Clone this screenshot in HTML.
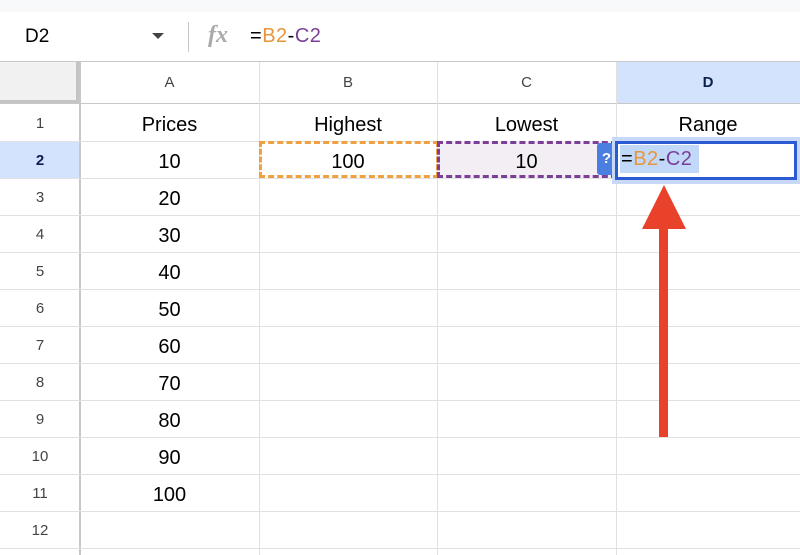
<!DOCTYPE html>
<html><head><meta charset="utf-8"><style>
*{margin:0;padding:0;box-sizing:border-box}
body{width:800px;height:555px;overflow:hidden;background:#fff;font-family:"Liberation Sans",Arial,sans-serif;position:relative}
.a{position:absolute}
.hl{position:absolute;left:0;width:800px;height:1px;background:#e1e1e1}
.vl{position:absolute;top:62px;height:493px;width:1px;background:#e1e1e1}
.rn{position:absolute;left:0;width:80px;text-align:center;font-size:15px;color:#444;line-height:37px;padding-top:1px}
.c{position:absolute;text-align:center;font-size:20px;color:#000;line-height:37px;padding-top:3px}
.ch{position:absolute;top:62px;height:42px;line-height:42px;text-align:center;font-size:15px;color:#444}
.f{font-family:"Liberation Sans",Arial,sans-serif;font-size:20px;letter-spacing:0.5px}
</style></head><body>
<div class="a" style="left:0;top:0;width:800px;height:12px;background:#f8f9fa"></div>
<div class="a" style="left:25px;top:26px;font-size:19px;color:#000">D2</div>
<div class="a" style="left:152px;top:33px;width:0;height:0;border-left:6px solid transparent;border-right:6px solid transparent;border-top:6px solid #444"></div>
<div class="a" style="left:188px;top:22px;width:1px;height:30px;background:#c7c7c7"></div>
<div class="a" style="left:208px;top:22px;font-size:24px;font-style:italic;font-family:'Liberation Serif',serif;color:#aaa;font-weight:bold">fx</div>
<div class="a f" style="left:250px;top:25px"><span style="color:#000">=</span><span style="color:#e8963a">B2</span><span style="color:#000">-</span><span style="color:#7b3f98">C2</span></div>
<div class="hl" style="top:61px;background:#c7c7c7"></div>
<div class="a" style="left:616px;top:62px;width:184px;height:42px;background:#d3e3fd"></div>
<div class="a" style="left:0;top:62px;width:80px;height:42px;background:#f1f1f1;border-right:4px solid #c4c4c4;border-bottom:4px solid #c4c4c4"></div>
<div class="ch" style="left:80px;width:179px">A</div>
<div class="ch" style="left:259px;width:178px">B</div>
<div class="ch" style="left:437px;width:179px">C</div>
<div class="ch" style="left:616px;width:184px;color:#0b1f4d;font-weight:bold">D</div>
<div class="hl" style="top:103px;background:#c7c7c7"></div>
<div class="a" style="left:0;top:141px;width:80px;height:37px;background:#d3e3fd"></div>
<div class="a" style="left:79px;top:62px;width:2px;height:493px;background:#c7c7c7"></div>
<div class="vl" style="left:259px"></div>
<div class="vl" style="left:437px"></div>
<div class="vl" style="left:616px"></div>
<div class="hl" style="top:141px"></div><div class="hl" style="top:178px"></div><div class="hl" style="top:215px"></div><div class="hl" style="top:252px"></div><div class="hl" style="top:289px"></div><div class="hl" style="top:326px"></div><div class="hl" style="top:363px"></div><div class="hl" style="top:400px"></div><div class="hl" style="top:437px"></div><div class="hl" style="top:474px"></div><div class="hl" style="top:511px"></div><div class="hl" style="top:548px"></div>
<div class="rn" style="top:104px">1</div>
<div class="rn" style="top:141px;color:#0b1f4d;font-weight:bold">2</div>
<div class="rn" style="top:178px">3</div><div class="rn" style="top:215px">4</div><div class="rn" style="top:252px">5</div><div class="rn" style="top:289px">6</div><div class="rn" style="top:326px">7</div><div class="rn" style="top:363px">8</div><div class="rn" style="top:400px">9</div><div class="rn" style="top:437px">10</div><div class="rn" style="top:474px">11</div><div class="rn" style="top:511px">12</div>
<div class="c" style="left:80px;width:179px;top:104px">Prices</div>
<div class="c" style="left:80px;width:179px;top:141px">10</div>
<div class="c" style="left:80px;width:179px;top:178px">20</div>
<div class="c" style="left:80px;width:179px;top:215px">30</div>
<div class="c" style="left:80px;width:179px;top:252px">40</div>
<div class="c" style="left:80px;width:179px;top:289px">50</div>
<div class="c" style="left:80px;width:179px;top:326px">60</div>
<div class="c" style="left:80px;width:179px;top:363px">70</div>
<div class="c" style="left:80px;width:179px;top:400px">80</div>
<div class="c" style="left:80px;width:179px;top:437px">90</div>
<div class="c" style="left:80px;width:179px;top:474px">100</div>
<div class="c" style="left:259px;width:178px;top:104px">Highest</div>
<div class="c" style="left:437px;width:179px;top:104px">Lowest</div>
<div class="c" style="left:616px;width:184px;top:104px">Range</div>
<div class="a" style="left:259px;top:141px;width:180px;height:37px;border:3px dashed #f0a040"></div>
<div class="c" style="left:259px;width:178px;top:141px">100</div>
<div class="a" style="left:437px;top:141px;width:180px;height:37px;background:#f3eef4;border:3px dashed #7b3f98"></div>
<div class="c" style="left:437px;width:179px;top:141px">10</div>
<div class="a" style="left:597px;top:143px;width:19px;height:32px;background:#4a7ee0;border-radius:3px;color:#fff;font-weight:bold;font-size:15px;text-align:center;line-height:32px">?</div>
<div class="a" style="left:612px;top:137px;width:188px;height:47px;background:#c7d9f7"></div>
<div class="a" style="left:615px;top:141px;width:182px;height:39px;background:#fff;border:3px solid #2a5bd3"></div>
<div class="a" style="left:620px;top:145px;width:79px;height:28px;background:#c2d8f8"></div>
<div class="a f" style="left:621px;top:148px"><span style="color:#000">=</span><span style="color:#e8963a">B2</span><span style="color:#000">-</span><span style="color:#7b3f98">C2</span></div>
<svg class="a" style="left:0;top:0" width="800" height="555"><polygon points="664,185 686,229 642,229" fill="#e8432a"/><rect x="659" y="228" width="9" height="209" fill="#e8432a"/></svg>
</body></html>
